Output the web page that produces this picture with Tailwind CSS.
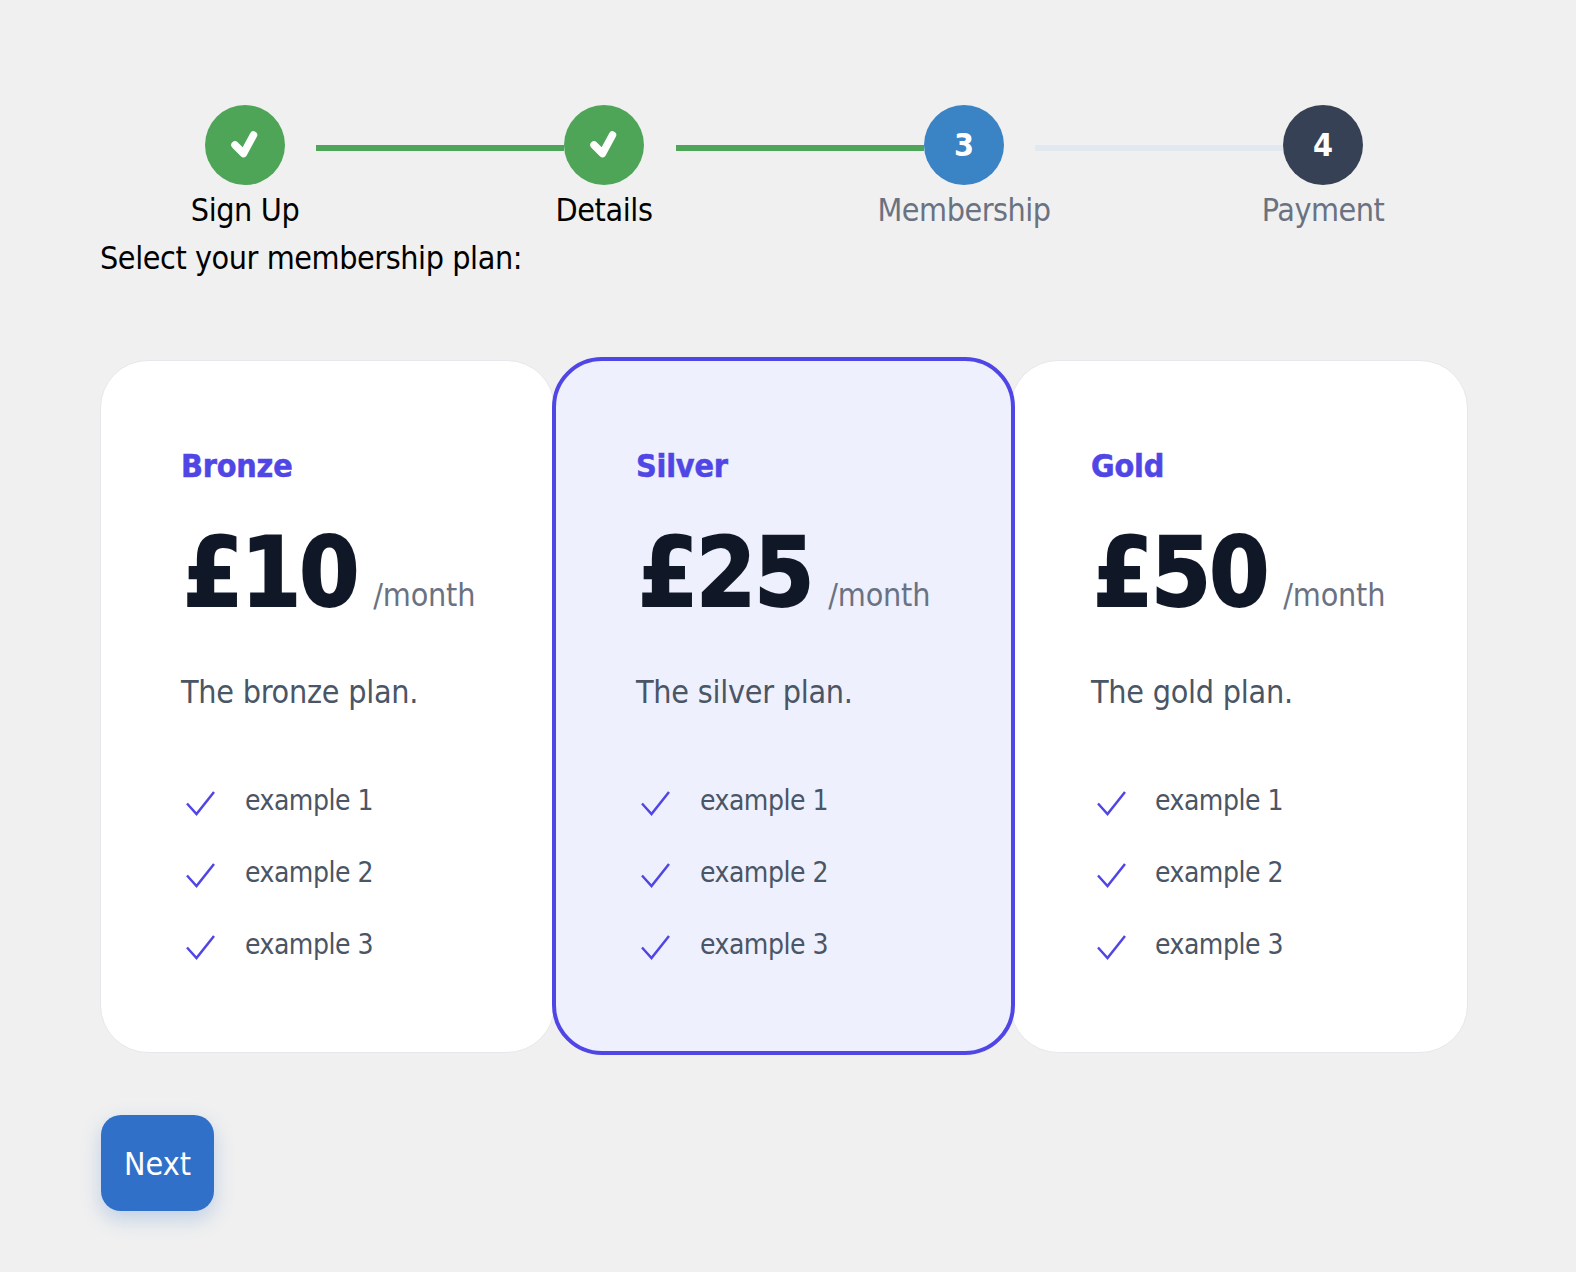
<!DOCTYPE html>
<html lang="en">
<head>
<meta charset="UTF-8" />
<title>Membership</title>
<script src="https://cdn.jsdelivr.net/npm/@tailwindcss/browser@4"></script>
</head>
<body class="bg-[#f0f0f0] font-['DejaVu_Sans_Condensed','DejaVu_Sans',sans-serif] text-[32px] leading-[48px] text-black">
<div class="w-[1368px] ml-[100px] pt-[105px] pb-[60px]">

  <!-- stepper -->
  <div class="flex px-[105px]">
    <div class="w-[80px] flex flex-col items-center shrink-0 z-10">
      <div class="w-[80px] h-[80px] rounded-full bg-[#4ea457] flex items-center justify-center">
        <svg class="w-[40px] h-[40px]" viewBox="0 0 40 40" fill="none" stroke="#fff" stroke-width="7.5" stroke-linecap="round" stroke-linejoin="round"><path d="M10 20l8.500 8.500L28.500 10"/></svg>
      </div>
      <span class="whitespace-nowrap mt-px tracking-[-0.4px]">Sign Up</span>
    </div>
    <div class="flex-1 h-[6px] mt-[40px] ml-[31px] bg-[#4ea457]"></div>
    <div class="w-[80px] flex flex-col items-center shrink-0 z-10">
      <div class="w-[80px] h-[80px] rounded-full bg-[#4ea457] flex items-center justify-center">
        <svg class="w-[40px] h-[40px]" viewBox="0 0 40 40" fill="none" stroke="#fff" stroke-width="7.5" stroke-linecap="round" stroke-linejoin="round"><path d="M10 20l8.500 8.500L28.500 10"/></svg>
      </div>
      <span class="whitespace-nowrap mt-px tracking-[-0.4px]">Details</span>
    </div>
    <div class="flex-1 h-[6px] mt-[40px] ml-[32px] bg-[#4ea457]"></div>
    <div class="w-[80px] flex flex-col items-center shrink-0 z-10">
      <div class="w-[80px] h-[80px] rounded-full bg-[#3a83c4] flex items-center justify-center text-white font-bold">3</div>
      <span class="whitespace-nowrap mt-px tracking-[-0.5px] text-gray-500">Membership</span>
    </div>
    <div class="flex-1 h-[6px] mt-[40px] ml-[31px] bg-[#e2e8f0]"></div>
    <div class="w-[80px] flex flex-col items-center shrink-0 z-10">
      <div class="w-[80px] h-[80px] rounded-full bg-[#374155] flex items-center justify-center text-white font-bold">4</div>
      <span class="whitespace-nowrap mt-px tracking-[-0.5px] text-gray-500">Payment</span>
    </div>
  </div>

  <p class="tracking-[-0.43px]">Select your membership plan:</p>

  <!-- plans -->
  <div class="grid grid-cols-[455px_455px_458px] mt-[78px]">
    <div class="h-[693px] bg-white border border-gray-200 rounded-[48px] p-[80px]">
      <h3 class="mt-px font-bold text-[#4f46e5] tracking-[-0.2px] [-webkit-text-stroke:0.5px_#4f46e5]">Bronze</h3>
      <div class="flex items-baseline gap-[16px] mt-[35px]">
        <span class="ml-[2px] text-[96px] leading-[96px] font-bold text-gray-900 tracking-[-2px] [-webkit-text-stroke:2px_#111827]">£10</span>
        <span class="text-gray-500 tracking-[-0.2px]">/month</span>
      </div>
      <p class="mt-[47px] text-gray-600 tracking-[-0.25px]">The bronze plan.</p>
      <ul class="mt-[64px] flex flex-col gap-[30px] text-[28px] leading-[42px] text-gray-600 tracking-[-0.5px]">
        <li class="flex gap-[30px]"><svg class="w-[32px] h-[32px] ml-[2px] mt-[9px] shrink-0" viewBox="0 0 32 32" fill="none" stroke="#4f46e5" stroke-width="2.500"><path d="M4 14.500l9.500 10.500L31 3"/></svg>example 1</li>
        <li class="flex gap-[30px]"><svg class="w-[32px] h-[32px] ml-[2px] mt-[9px] shrink-0" viewBox="0 0 32 32" fill="none" stroke="#4f46e5" stroke-width="2.500"><path d="M4 14.500l9.500 10.500L31 3"/></svg>example 2</li>
        <li class="flex gap-[30px]"><svg class="w-[32px] h-[32px] ml-[2px] mt-[9px] shrink-0" viewBox="0 0 32 32" fill="none" stroke="#4f46e5" stroke-width="2.500"><path d="M4 14.500l9.500 10.500L31 3"/></svg>example 3</li>
      </ul>
    </div>
    <div class="-mx-[3px] -mr-[5px] -mt-[3px] -mb-[2px] bg-[#eef0fd] border-[4px] border-[#4f46e5] rounded-[50px] p-[80px] z-10">
      <h3 class="mt-px font-bold text-[#4f46e5] tracking-[-0.2px] [-webkit-text-stroke:0.5px_#4f46e5]">Silver</h3>
      <div class="flex items-baseline gap-[16px] mt-[35px]">
        <span class="ml-[2px] text-[96px] leading-[96px] font-bold text-gray-900 tracking-[-2px] [-webkit-text-stroke:2px_#111827]">£25</span>
        <span class="text-gray-500 tracking-[-0.2px]">/month</span>
      </div>
      <p class="mt-[47px] text-gray-600 tracking-[-0.25px]">The silver plan.</p>
      <ul class="mt-[64px] flex flex-col gap-[30px] text-[28px] leading-[42px] text-gray-600 tracking-[-0.5px]">
        <li class="flex gap-[30px]"><svg class="w-[32px] h-[32px] ml-[2px] mt-[9px] shrink-0" viewBox="0 0 32 32" fill="none" stroke="#4f46e5" stroke-width="2.500"><path d="M4 14.500l9.500 10.500L31 3"/></svg>example 1</li>
        <li class="flex gap-[30px]"><svg class="w-[32px] h-[32px] ml-[2px] mt-[9px] shrink-0" viewBox="0 0 32 32" fill="none" stroke="#4f46e5" stroke-width="2.500"><path d="M4 14.500l9.500 10.500L31 3"/></svg>example 2</li>
        <li class="flex gap-[30px]"><svg class="w-[32px] h-[32px] ml-[2px] mt-[9px] shrink-0" viewBox="0 0 32 32" fill="none" stroke="#4f46e5" stroke-width="2.500"><path d="M4 14.500l9.500 10.500L31 3"/></svg>example 3</li>
      </ul>
    </div>
    <div class="h-[693px] bg-white border border-gray-200 rounded-[48px] p-[80px]">
      <h3 class="mt-px font-bold text-[#4f46e5] tracking-[-0.2px] [-webkit-text-stroke:0.5px_#4f46e5]">Gold</h3>
      <div class="flex items-baseline gap-[16px] mt-[35px]">
        <span class="ml-[2px] text-[96px] leading-[96px] font-bold text-gray-900 tracking-[-2px] [-webkit-text-stroke:2px_#111827]">£50</span>
        <span class="text-gray-500 tracking-[-0.2px]">/month</span>
      </div>
      <p class="mt-[47px] text-gray-600 tracking-[-0.25px]">The gold plan.</p>
      <ul class="mt-[64px] flex flex-col gap-[30px] text-[28px] leading-[42px] text-gray-600 tracking-[-0.5px]">
        <li class="flex gap-[30px]"><svg class="w-[32px] h-[32px] ml-[3px] mt-[9px] shrink-0" viewBox="0 0 32 32" fill="none" stroke="#4f46e5" stroke-width="2.500"><path d="M4 14.500l9.500 10.500L31 3"/></svg><span class="-ml-px">example 1</span></li>
        <li class="flex gap-[30px]"><svg class="w-[32px] h-[32px] ml-[3px] mt-[9px] shrink-0" viewBox="0 0 32 32" fill="none" stroke="#4f46e5" stroke-width="2.500"><path d="M4 14.500l9.500 10.500L31 3"/></svg><span class="-ml-px">example 2</span></li>
        <li class="flex gap-[30px]"><svg class="w-[32px] h-[32px] ml-[3px] mt-[9px] shrink-0" viewBox="0 0 32 32" fill="none" stroke="#4f46e5" stroke-width="2.500"><path d="M4 14.500l9.500 10.500L31 3"/></svg><span class="-ml-px">example 3</span></li>
      </ul>
    </div>
  </div>

  <button class="block mt-[62px] px-[23px] pt-px h-[96px] ml-px rounded-[20px] bg-[#3070c8] text-white shadow-[0_8px_20px_rgba(49,112,200,0.25)]">Next</button>
</div>
</body>
</html>
